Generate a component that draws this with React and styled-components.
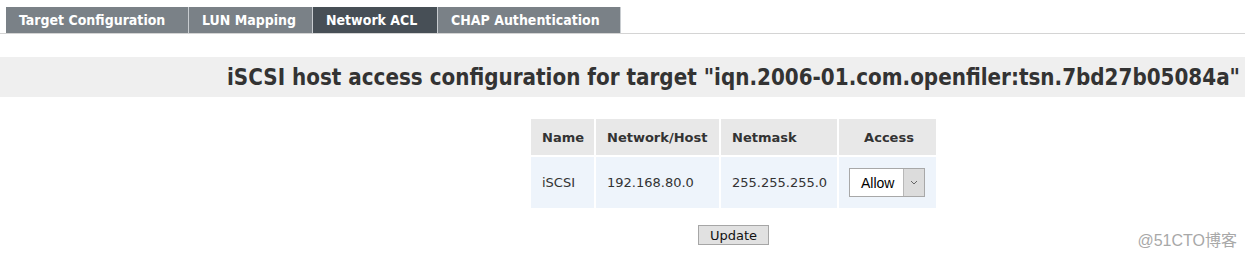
import React from "react";
import styled, { createGlobalStyle } from "styled-components";

const Global = createGlobalStyle`
  html, body { margin: 0; padding: 0; background: #fff; }
  body { font-family: "DejaVu Sans", Verdana, sans-serif; color: #333; }
  #root { position: relative; width: 1245px; height: 259px; overflow: hidden; }
`;

const TabBar = styled.div`
  display: flex;
  padding: 7px 0 0 6px;
  border-bottom: 1px solid #d4d4d4;
  height: 26px;
`;

const Tab = styled.div`
  display: flex;
  align-items: center;
  justify-content: flex-start;
  padding-left: 13px;
  width: ${(p) => p.$w}px;
  height: 26px;
  background: ${(p) => (p.$active ? "#474f56" : "#7a8187")};
  color: #fff;
  font-family: "DejaVu Sans Condensed", "DejaVu Sans", sans-serif;
  font-weight: bold;
  font-size: 14px;
  border-right: 1px solid #c8ccd0;
  box-sizing: border-box;
  white-space: nowrap;
`;

const TitleBand = styled.div`
  margin-top: 23px;
  height: 40px;
  background: #efefef;
  display: flex;
  align-items: center;
  justify-content: center;
  padding-left: 222px;
`;

const Title = styled.h1`
  margin: 0;
  font-family: "DejaVu Sans Condensed", "DejaVu Sans", sans-serif;
  font-weight: bold;
  font-size: 22.2px;
  color: #333;
  white-space: nowrap;
`;

const Content = styled.div`
  padding-left: 222px;
  display: flex;
  flex-direction: column;
  align-items: center;
  margin-top: 20px;
`;

const Table = styled.table`
  border-collapse: separate;
  border-spacing: 2px;
  font-size: 13px;
`;

const Th = styled.th`
  background: #e8e8e8;
  height: 36px;
  padding: 0 8px 0 11px;
  text-align: ${(p) => (p.$center ? "center" : "left")};
  font-weight: bold;
  color: #333;
  width: ${(p) => p.$w}px;
  box-sizing: border-box;
`;

const Td = styled.td`
  background: #eef4fb;
  height: 51px;
  padding: 0 8px 0 11px;
  color: #333;
  box-sizing: border-box;
`;

const SelectBox = styled.div`
  display: flex;
  width: 76px;
  height: 29px;
  border: 1px solid #a8a8a8;
  box-sizing: border-box;
  background: #fff;
  margin-left: -1px;
`;

const SelectValue = styled.div`
  flex: 1;
  display: flex;
  align-items: center;
  padding-left: 11px;
  font-family: "Liberation Sans", Arial, sans-serif;
  font-size: 14px;
  color: #000;
`;

const SelectArrow = styled.div`
  width: 20px;
  background: #dcdcdc;
  border-left: 1px solid #b8b8b8;
  display: flex;
  align-items: center;
  justify-content: center;
`;

const Button = styled.button`
  margin-top: 15px;
  width: 71px;
  height: 20px;
  padding: 0;
  border: 1px solid #a6a6a6;
  background: #e1e1e1;
  font-family: "DejaVu Sans", sans-serif;
  font-size: 13px;
  color: #111;
`;

const Watermark = styled.div`
  position: absolute;
  right: 8px;
  bottom: 8px;
  font-family: "Liberation Sans", "Noto Sans CJK SC", sans-serif;
  font-size: 16px;
  color: #a8a8a8;
`;

export default function App() {
  return (
    <>
      <Global />
      <TabBar>
        <Tab $w={183}>Target Configuration</Tab>
        <Tab $w={124}>LUN Mapping</Tab>
        <Tab $w={125} $active>Network ACL</Tab>
        <Tab $w={183}>CHAP Authentication</Tab>
      </TabBar>
      <TitleBand>
        <Title>iSCSI host access configuration for target "iqn.2006-01.com.openfiler:tsn.7bd27b05084a"</Title>
      </TitleBand>
      <Content>
        <Table>
          <thead>
            <tr>
              <Th $w={63}>Name</Th>
              <Th $w={123}>Network/Host</Th>
              <Th $w={116}>Netmask</Th>
              <Th $w={97} $center>Access</Th>
            </tr>
          </thead>
          <tbody>
            <tr>
              <Td>iSCSI</Td>
              <Td>192.168.80.0</Td>
              <Td>255.255.255.0</Td>
              <Td>
                <SelectBox>
                  <SelectValue>Allow</SelectValue>
                  <SelectArrow>
                    <svg width="8" height="5" viewBox="0 0 8 5">
                      <path d="M1 1 L4 4 L7 1" fill="none" stroke="#666" strokeWidth="1" />
                    </svg>
                  </SelectArrow>
                </SelectBox>
              </Td>
            </tr>
          </tbody>
        </Table>
        <Button>Update</Button>
      </Content>
      <Watermark>@51CTO博客</Watermark>
    </>
  );
}
